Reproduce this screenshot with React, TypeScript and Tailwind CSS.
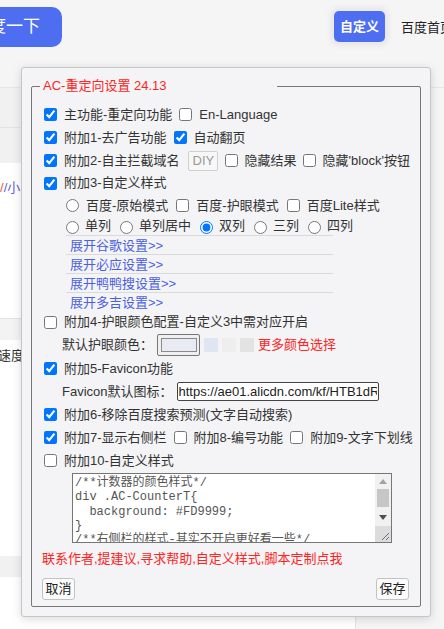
import React from 'react';

const cssText = `/**计数器的颜色样式*/
div .AC-CounterT{
  background: #FD9999;
}
/**右侧栏的样式-其实不开启更好看一些*/
#content_right{
  border-left: 1px solid #e1e1e1;
}
/**搜索结果的间距*/
.c-container{
  margin-bottom: 14px;
}`;

const links = ['展开谷歌设置>>', '展开必应设置>>', '展开鸭鸭搜设置>>', '展开多吉设置>>'];

function Check({ on = false, className = '' }: { on?: boolean; className?: string }) {
  return <input type="checkbox" defaultChecked={on} className={`h-[13px] w-[13px] shrink-0 ${className}`} />;
}

function Radio({ name, on = false, className = '' }: { name: string; on?: boolean; className?: string }) {
  return <input type="radio" name={name} defaultChecked={on} className={`h-[13px] w-[13px] shrink-0 ${className}`} />;
}

// 自定义样式的文本框，滚动条自己画
function StyleBox() {
  return (
    <div className="ml-[40px] mt-[1px] flex h-[70px] w-[320px] border border-[#767676] bg-white">
      <textarea
        readOnly
        defaultValue={cssText}
        className="h-full min-w-0 flex-1 resize-none overflow-hidden bg-white p-[2px] font-['Liberation_Mono','Noto_Sans_CJK_SC',monospace] text-[12px] leading-[14.3px] text-[#555] outline-none"
      />
      <div className="flex w-[16px] shrink-0 flex-col bg-[#f1f1f1]">
        <div className="flex h-[15px] items-center justify-center">
          <svg width="8" height="5" viewBox="0 0 8 5">
            <path d="M4 0 L8 5 L0 5 Z" fill="#a3a3a3" />
          </svg>
        </div>
        <div className="mx-auto h-[18px] w-[12px] bg-[#c6c6c6]" />
        <div className="h-[3px]" />
        <div className="flex h-[14px] items-center justify-center">
          <svg width="8" height="5" viewBox="0 0 8 5">
            <path d="M0 0 L8 0 L4 5 Z" fill="#505050" />
          </svg>
        </div>
        <div className="h-[2px]" />
        <div className="h-[16px] bg-[#dcdcdc]">
          <svg width="16" height="16" viewBox="0 0 16 16">
            <path d="M14 7 L7 14 M14 11 L11 14" stroke="#6f6f6f" strokeWidth="1" />
          </svg>
        </div>
      </div>
    </div>
  );
}

function SettingsPanel() {
  return (
    <div className="absolute left-[21px] top-[67px] w-[410px] rounded-[3px] border border-[#c6c6c6] bg-[#f4f4f6] px-[9px] pb-[9px] pt-[8px] shadow-[0_2px_10px_rgba(0,0,0,0.15)]">
      <fieldset className="m-0 rounded-[2px] border border-[#777] p-0 pb-[6px] text-[13px] text-[#333]">
        <legend className="ml-[8px] h-[20px] w-[237px] pl-[3px] leading-[20px] text-[#ff2424]">AC-重定向设置 24.13</legend>

        <div className="pt-[7px]">
          <div className="flex h-[23px] items-center pl-[12px]">
            <Check on />
            <span className="ml-[7px]">主功能-重定向功能</span>
            <Check className="ml-[7px]" />
            <span className="ml-[7px]">En-Language</span>
          </div>
          <div className="flex h-[23px] items-center pl-[12px]">
            <Check on />
            <span className="ml-[7px]">附加1-去广告功能</span>
            <Check on className="ml-[7px]" />
            <span className="ml-[7px]">自动翻页</span>
          </div>
          <div className="flex h-[23px] items-center pl-[12px]">
            <Check on />
            <span className="ml-[7px]">附加2-自主拦截域名</span>
            <div className="ml-[8px] flex h-[20px] w-[30px] items-center rounded-[2px] border border-[#cfcfcf] bg-[#f7f7f7] pl-[4px] text-[13px] text-[#9a9a9a]">DIY</div>
            <Check className="ml-[7px]" />
            <span className="ml-[7px]">隐藏结果</span>
            <Check className="ml-[6px]" />
            <span className="ml-[7px]">隐藏'block'按钮</span>
          </div>
          <div className="flex h-[22px] items-center pl-[12px]">
            <Check on />
            <span className="ml-[7px]">附加3-自定义样式</span>
          </div>
          <div className="flex h-[23px] items-center pl-[34px]">
            <Radio name="mode" />
            <span className="ml-[7px]">百度-原始模式</span>
            <Check className="ml-[8px]" />
            <span className="ml-[7px]">百度-护眼模式</span>
            <Check className="ml-[8px]" />
            <span className="ml-[7px]">百度Lite样式</span>
          </div>
          <div className="flex h-[18px] items-center pl-[34px]">
            <Radio name="cols" className="mt-[3px]" />
            <span className="ml-[6px]">单列</span>
            <Radio name="cols" className="ml-[9px] mt-[3px]" />
            <span className="ml-[6px]">单列居中</span>
            <Radio name="cols" on className="ml-[9px] mt-[3px]" />
            <span className="ml-[6px]">双列</span>
            <Radio name="cols" className="ml-[9px] mt-[3px]" />
            <span className="ml-[6px]">三列</span>
            <Radio name="cols" className="ml-[9px] mt-[3px]" />
            <span className="ml-[6px]">四列</span>
          </div>

          <div className="ml-[34px] w-[267px]">
            {links.map((t) => (
              <div key={t} className="h-[19px] border-t border-[#dadada] pl-[4px] leading-[19px] text-[#4a5fe2]">
                {t}
              </div>
            ))}
          </div>

          <div className="flex h-[22px] items-center pl-[12px]">
            <Check />
            <span className="ml-[7px]">附加4-护眼颜色配置-自定义3中需对应开启</span>
          </div>
          <div className="flex h-[24px] items-center pl-[30px]">
            <span>默认护眼颜色：</span>
            <div className="ml-[4px] flex h-[22px] w-[43px] items-center justify-center rounded-[2px] border border-[#767676] bg-[#efefef]">
              <div className="h-[14px] w-[36px] border border-[#8a8a8a] bg-[#e8ebf3]" />
            </div>
            <div className="ml-[4px] h-[14px] w-[14px] bg-[#dfe5f1]" />
            <div className="ml-[4px] h-[14px] w-[14px] bg-[#eeeeee]" />
            <div className="ml-[4px] h-[14px] w-[14px] bg-[#e3e3e3]" />
            <span className="ml-[4px] text-[#ff2424]">更多颜色选择</span>
          </div>
          <div className="flex h-[23px] items-center pl-[12px]">
            <Check on />
            <span className="ml-[7px]">附加5-Favicon功能</span>
          </div>
          <div className="flex h-[23px] items-center pl-[30px]">
            <span>Favicon默认图标：</span>
            <input
              readOnly
              defaultValue="https://ae01.alicdn.com/kf/HTB1dRBnXL5TBuNjSspmq6yDRVXaK.jpg"
              className="ml-[4px] h-[19px] w-[202px] rounded-[2px] border border-[#444] bg-white px-[1px] font-['Liberation_Sans','Noto_Sans_CJK_SC',sans-serif] text-[13px] text-[#222] outline-none"
            />
          </div>
          <div className="flex h-[23px] items-center pl-[12px]">
            <Check on />
            <span className="ml-[7px]">附加6-移除百度搜索预测(文字自动搜索)</span>
          </div>
          <div className="flex h-[23px] items-center pl-[12px]">
            <Check on />
            <span className="ml-[7px]">附加7-显示右侧栏</span>
            <Check className="ml-[7px]" />
            <span className="ml-[7px]">附加8-编号功能</span>
            <Check className="ml-[7px]" />
            <span className="ml-[7px]">附加9-文字下划线</span>
          </div>
          <div className="flex h-[23px] items-center pl-[12px]">
            <Check />
            <span className="ml-[7px]">附加10-自定义样式</span>
          </div>

          <StyleBox />

          <div className="mt-[7px] h-[18px] pl-[10px] leading-[18px] text-[#ff2424]">
            联系作者,提建议,寻求帮助,自定义样式,脚本定制点我
          </div>

          <div className="mt-[10px] flex justify-between pl-[10px] pr-[11px]">
            <button className="flex h-[22px] w-[33px] items-center justify-center rounded-[3px] border border-[#c2c2c2] bg-[#fbfbfb] text-[13px] text-[#222]">取消</button>
            <button className="flex h-[22px] w-[33px] items-center justify-center rounded-[3px] border border-[#c2c2c2] bg-[#fbfbfb] text-[13px] text-[#222]">保存</button>
          </div>
        </div>
      </fieldset>
    </div>
  );
}

export default function App() {
  return (
    <div className="relative h-[629px] w-[444px] overflow-hidden bg-[#f5f5f6] font-['Liberation_Sans','Noto_Sans_CJK_SC',sans-serif] text-[13px] text-[#333]">
      {/* 页头 */}
      <div className="flex h-[88px] items-start border-b border-[#e6e6e6]">
        <div className="mt-[7px] flex h-[40px] w-[62px] shrink-0 items-center justify-end overflow-hidden whitespace-nowrap rounded-r-[10px] bg-[#4e6ef2] pr-[22px] text-[17px] text-white">
          百度一下
        </div>
        <div className="ml-[272px] mt-[11px] flex h-[31px] w-[51px] shrink-0 items-center justify-center rounded-[5px] bg-[#4e6ef2] text-[13px] font-bold text-white shadow-[0_0_5px_4px_#e8e8ea]">
          自定义
        </div>
        <div className="ml-[16px] mt-[18px] shrink-0 whitespace-nowrap text-[13px] text-[#222]">百度首页</div>
      </div>

      {/* 页面内容 */}
      <div className="flex">
        <div className="w-[355px] shrink-0">
          <div className="h-[40px] border-b border-[#e3e3e3] bg-[#f1f1f2]" />
          <div className="h-[35px] bg-[#f1f1f2]" />
          <div className="h-[155px] bg-white pt-[15px]">
            <span className="text-[#e0613f]">/</span>
            <span className="text-[#5b5fd6]">/小</span>
          </div>
          <div className="h-[22px] border-t border-[#e3e3e3] bg-[#f3f3f4]" />
          <div className="h-[216px] bg-white pt-[6px]">
            <span className="-ml-[2px]">速度</span>
          </div>
          <div className="h-[21px] bg-[#f1f1f2]" />
          <div className="h-[60px] bg-white" />
        </div>
        <div className="h-[541px] flex-1 border-l border-[#e3e3e3] bg-[#f5f5f6]" />
      </div>

      <SettingsPanel />
    </div>
  );
}
